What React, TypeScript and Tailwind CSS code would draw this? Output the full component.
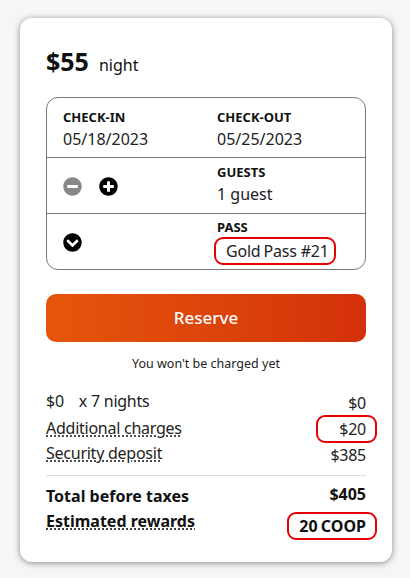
import { FaMinusCircle, FaPlusCircle, FaChevronCircleDown } from 'react-icons/fa';

export default function App() {
  return (
    <div className="min-h-screen bg-[#f6f6f6] pt-[18px] pl-[20px] font-['Noto_Sans',sans-serif] text-[#111]">
      <div className="w-[372px] rounded-[12px] bg-white px-[26px] pt-[27px] pb-[24px] shadow-[0_1px_6px_rgba(0,0,0,0.45)]">
        {/* price per night */}
        <div className="flex items-baseline gap-[10px] leading-[32px]">
          <span className="text-[25px] font-bold">$55</span>
          <span className="text-[16px]">night</span>
        </div>

        {/* booking box */}
        <div className="mt-[16px] rounded-[12px] border border-[#777]">
          <div className="flex border-b border-[#777] pl-[16px] pt-[11px] pb-[6px]">
            <div className="w-[154px]">
              <div className="text-[13px] font-bold leading-[16px]">CHECK-IN</div>
              <div className="mt-[2px] text-[16px] leading-[24px] text-[#222]">05/18/2023</div>
            </div>
            <div>
              <div className="text-[13px] font-bold leading-[16px]">CHECK-OUT</div>
              <div className="mt-[2px] text-[16px] leading-[24px] text-[#222]">05/25/2023</div>
            </div>
          </div>

          <div className="flex border-b border-[#777] pl-[16px]">
            <div className="flex w-[154px] items-center gap-[17px] pt-[2px]">
              <FaMinusCircle className="h-[19px] w-[19px] text-[#888]" />
              <FaPlusCircle className="h-[19px] w-[19px] text-black" />
            </div>
            <div className="pt-[6px] pb-[7px]">
              <div className="text-[13px] font-bold leading-[16px]">GUESTS</div>
              <div className="mt-[2px] text-[16px] leading-[24px] text-[#222]">1 guest</div>
            </div>
          </div>

          <div className="flex pl-[16px]">
            <div className="flex w-[154px] items-center pt-[2px]">
              <FaChevronCircleDown className="h-[19px] w-[19px] text-black" />
            </div>
            <div className="pt-[5px] pb-[6px]">
              <div className="text-[13px] font-bold leading-[16px]">PASS</div>
              <div className="mt-[4px] -ml-[1px] w-[118px] rounded-[7px] py-[2px] pl-[10px] text-[16px] leading-[20px] tracking-[-0.2px] text-[#222] outline-2 outline-[#e60000]">
                Gold<span className="ml-[3px]">Pass #21</span>
              </div>
            </div>
          </div>
        </div>

        <button className="mt-[24px] h-[48px] w-full rounded-[10px] bg-linear-to-r from-[#e5560c] to-[#d4300a] text-[17px] font-medium text-white">
          Reserve
        </button>

        <p className="mt-[13px] text-center text-[12.5px] leading-[18px] text-[#222]">You won't be charged yet</p>

        {/* price breakdown */}
        <div className="mt-[16px] text-[16px] leading-[25px] text-[#222]">
          <div className="flex items-start justify-between tracking-[-0.25px]">
            <span>
              <span>$0</span>
              <span className="ml-[15px]">x 7 nights</span>
            </span>
            <span className="mt-[2px]">$0</span>
          </div>
          <div className="flex items-start justify-between tracking-[-0.25px]">
            <span className="underline decoration-dotted underline-offset-[2px]">Additional charges</span>
            <span className="-mr-[9px] mt-[1px] w-[57px] rounded-[7px] py-[2px] pr-[9px] text-right leading-[20px] outline-2 outline-[#e60000]">
              $20
            </span>
          </div>
          <div className="flex items-start justify-between tracking-[-0.25px]">
            <span className="underline decoration-dotted underline-offset-[2px]">Security deposit</span>
            <span className="mt-[2px]">$385</span>
          </div>

          <div className="mt-[7px] h-px bg-[#ddd]" />

          <div className="mt-[8px] flex items-start justify-between font-bold text-[#111]">
            <span>Total before taxes</span>
            <span className="-mt-[2px]">$405</span>
          </div>
          <div className="flex items-start justify-between font-bold text-[#111]">
            <span className="underline decoration-dotted underline-offset-[2px]">Estimated rewards</span>
            <span className="-mr-[9px] mt-[5px] w-[86px] rounded-[7px] py-[2px] pr-[9px] text-right leading-[20px] outline-2 outline-[#e60000] [word-spacing:-1px]">
              20 COOP
            </span>
          </div>
        </div>
      </div>
    </div>
  );
}
